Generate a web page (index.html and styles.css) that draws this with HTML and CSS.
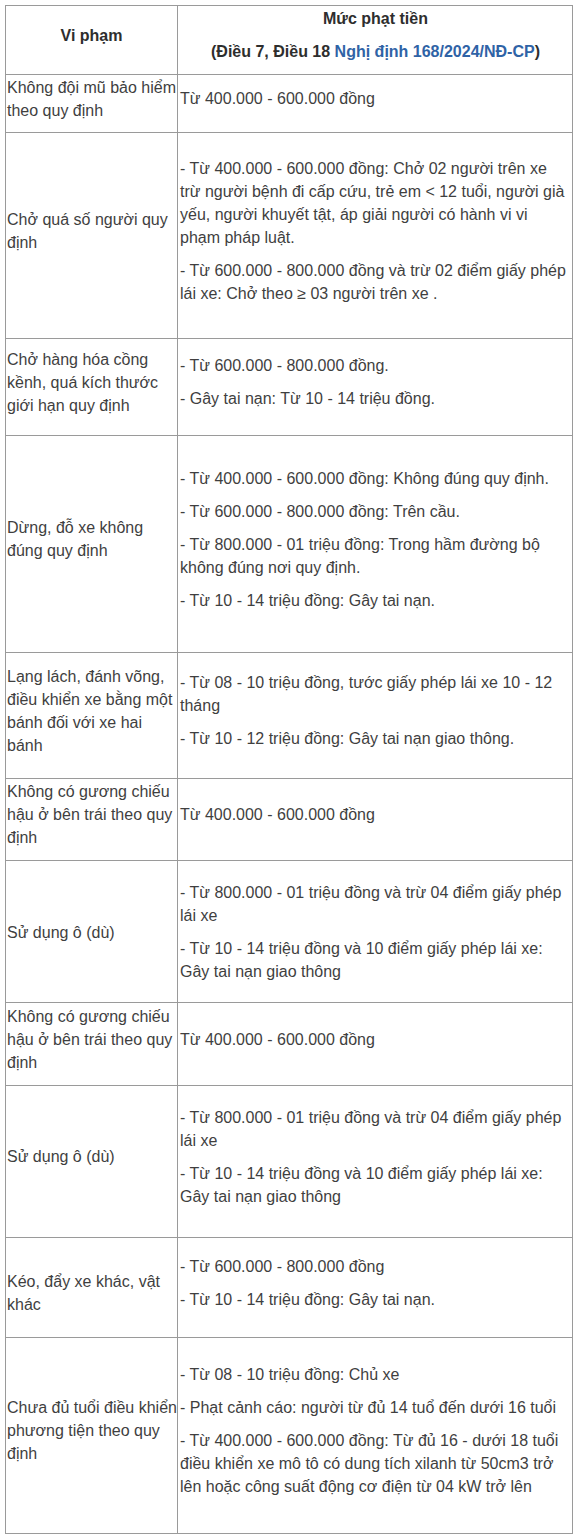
FILE: index.html
```html
<!DOCTYPE html>
<html lang="vi">
<head>
<meta charset="utf-8">
<title>Mức phạt</title>
<link rel="stylesheet" href="styles.css">
</head>
<body>
<table class="fines">
  <colgroup><col class="col-left"><col class="col-right"></colgroup>
  <tr class="row-head">
    <th class="cell-left"><p>Vi phạm</p></th>
    <th class="cell-right"><p>Mức phạt tiền</p><p>(Điều 7, Điều 18 <a class="link">Nghị định 168/2024/NĐ-CP</a>)</p></th>
  </tr>
  <tr class="row-1">
    <td class="cell-left"><p>Không đội mũ bảo hiểm<br>theo quy định</p></td>
    <td class="cell-right"><p>Từ 400.000 - 600.000 đồng</p></td>
  </tr>
  <tr class="row-2">
    <td class="cell-left"><p>Chở quá số người quy<br>định</p></td>
    <td class="cell-right"><p>- Từ 400.000 - 600.000 đồng: Chở 02 người trên xe<br>trừ người bệnh đi cấp cứu, trẻ em &lt; 12 tuổi, người già<br>yếu, người khuyết tật, áp giải người có hành vi vi<br>phạm pháp luật.</p><p>- Từ 600.000 - 800.000 đồng và trừ 02 điểm giấy phép<br>lái xe: Chở theo ≥ 03 người trên xe .</p></td>
  </tr>
  <tr class="row-3">
    <td class="cell-left"><p>Chở hàng hóa cồng<br>kềnh, quá kích thước<br>giới hạn quy định</p></td>
    <td class="cell-right"><p>- Từ 600.000 - 800.000 đồng.</p><p>- Gây tai nạn: Từ 10 - 14 triệu đồng.</p></td>
  </tr>
  <tr class="row-4">
    <td class="cell-left"><p>Dừng, đỗ xe không<br>đúng quy định</p></td>
    <td class="cell-right"><p>- Từ 400.000 - 600.000 đồng: Không đúng quy định.</p><p>- Từ 600.000 - 800.000 đồng: Trên cầu.</p><p>- Từ 800.000 - 01 triệu đồng: Trong hầm đường bộ<br>không đúng nơi quy định.</p><p>- Từ 10 - 14 triệu đồng: Gây tai nạn.</p></td>
  </tr>
  <tr class="row-5">
    <td class="cell-left"><p>Lạng lách, đánh võng,<br>điều khiển xe bằng một<br>bánh đối với xe hai<br>bánh</p></td>
    <td class="cell-right"><p>- Từ 08 - 10 triệu đồng, tước giấy phép lái xe 10 - 12<br>tháng</p><p>- Từ 10 - 12 triệu đồng: Gây tai nạn giao thông.</p></td>
  </tr>
  <tr class="row-6">
    <td class="cell-left"><p>Không có gương chiếu<br>hậu ở bên trái theo quy<br>định</p></td>
    <td class="cell-right"><p>Từ 400.000 - 600.000 đồng</p></td>
  </tr>
  <tr class="row-7">
    <td class="cell-left"><p>Sử dụng ô (dù)</p></td>
    <td class="cell-right"><p>- Từ 800.000 - 01 triệu đồng và trừ 04 điểm giấy phép<br>lái xe</p><p>- Từ 10 - 14 triệu đồng và 10 điểm giấy phép lái xe:<br>Gây tai nạn giao thông</p></td>
  </tr>
  <tr class="row-8">
    <td class="cell-left"><p>Không có gương chiếu<br>hậu ở bên trái theo quy<br>định</p></td>
    <td class="cell-right"><p>Từ 400.000 - 600.000 đồng</p></td>
  </tr>
  <tr class="row-9">
    <td class="cell-left"><p>Sử dụng ô (dù)</p></td>
    <td class="cell-right"><p>- Từ 800.000 - 01 triệu đồng và trừ 04 điểm giấy phép<br>lái xe</p><p>- Từ 10 - 14 triệu đồng và 10 điểm giấy phép lái xe:<br>Gây tai nạn giao thông</p></td>
  </tr>
  <tr class="row-10">
    <td class="cell-left"><p>Kéo, đẩy xe khác, vật<br>khác</p></td>
    <td class="cell-right"><p>- Từ 600.000 - 800.000 đồng</p><p>- Từ 10 - 14 triệu đồng: Gây tai nạn.</p></td>
  </tr>
  <tr class="row-11">
    <td class="cell-left"><p>Chưa đủ tuổi điều khiển<br>phương tiện theo quy<br>định</p></td>
    <td class="cell-right"><p>- Từ 08 - 10 triệu đồng: Chủ xe</p><p>- Phạt cảnh cáo: người từ đủ 14 tuổ đến dưới 16 tuổi</p><p>- Từ 400.000 - 600.000 đồng: Từ đủ 16 - dưới 18 tuổi<br>điều khiển xe mô tô có dung tích xilanh từ 50cm3 trở<br>lên hoặc công suất động cơ điện từ 04 kW trở lên</p></td>
  </tr>
</table>
</body>
</html>
```

FILE: styles.css
```css
html, body {
  margin: 0;
  background: #ffffff;
}
body {
  padding: 5px 0 0 5px;
  font-family: "Liberation Sans", Arial, sans-serif;
  font-size: 16px;
  line-height: 23px;
  color: #3f3f3f;
}
.fines {
  border-collapse: collapse;
  table-layout: fixed;
  width: 567px;
  border: 1px solid #8c8c8c;
}
.col-left { width: 172px; }
.col-right { width: 395px; }
.fines th,
.fines td {
  border: 1px solid #9a9a9a;
  vertical-align: middle;
  white-space: nowrap;
  overflow: visible;
  text-align: left;
  font-weight: normal;
}
.cell-left { padding: 0 1px 0 1px; }
.cell-right { padding: 0 1px 0 2px; }
.fines p {
  margin: 0 0 10px 0;
}
.row-head th {
  font-weight: bold;
  text-align: center;
  color: #2e2e2e;
}
.link {
  color: #2f63a6;
  text-decoration: none;
}
.row-head { height: 69px; }
.row-1 { height: 58px; }
.row-2 { height: 206px; }
.row-3 { height: 97px; }
.row-4 { height: 217px; }
.row-5 { height: 126px; }
.row-6 { height: 82px; }
.row-7 { height: 142px; }
.row-7 td { padding-top: 11px; }
.row-8 { height: 83px; }
.row-9 { height: 152px; }
.row-10 { height: 100px; }
.row-10 .cell-left { padding-top: 20px; }
.row-11 { height: 196px; }
```
